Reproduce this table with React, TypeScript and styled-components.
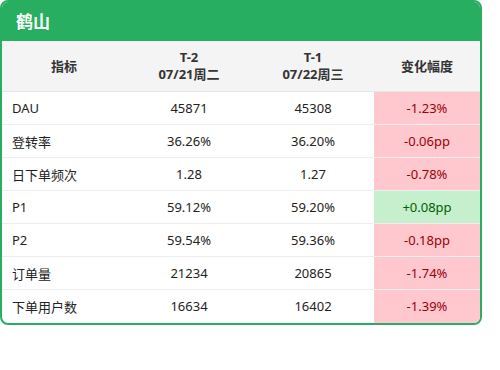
import React from "react";
import styled, { createGlobalStyle } from "styled-components";

const Global = createGlobalStyle`
  html, body { margin: 0; padding: 0; background: #ffffff; }
  body { font-family: "Noto Sans", "Noto Sans CJK SC", sans-serif; }
`;

const Card = styled.div`
  width: 482px;
  box-sizing: border-box;
  border: 2px solid #27ae60;
  border-radius: 8px;
  overflow: hidden;
  background: #ffffff;
`;

const Header = styled.div`
  height: 39px;
  background: #27ae60;
  color: #ffffff;
  display: flex;
  align-items: center;
  padding: 0 14px;
  font-family: "Noto Sans CJK SC", sans-serif;
  font-weight: 700;
  font-size: 17px;
  padding-bottom: 2px;
  box-sizing: border-box;
`;

const Table = styled.table`
  width: 100%;
  border-collapse: collapse;
  table-layout: fixed;
  font-size: 13px;
  color: #222;
`;

const Th = styled.th<{ $w: number }>`
  width: ${(p) => p.$w}px;
  height: 50px;
  padding: 0;
  background: #f4f4f4;
  color: #333;
  font-weight: 700;
  font-size: 13px;
  line-height: 17px;
  text-align: center;
  border-bottom: 1px solid #e8e8e8;
  font-family: "Noto Sans", "Noto Sans CJK SC", sans-serif;
`;

const Row = styled.tr`
  height: 33px;
  & > td { border-bottom: 1px solid #eeeeee; }
  &:last-child > td { border-bottom: none; }
`;

const Name = styled.td`
  padding: 0 0 0 10px;
  text-align: left;
  font-family: "Noto Sans", "Noto Sans CJK SC", sans-serif;
`;

const Num = styled.td`
  padding: 0;
  text-align: center;
`;

const Change = styled.td<{ $up: boolean }>`
  padding: 0;
  text-align: center;
  background: ${(p) => (p.$up ? "#c6efce" : "#ffc7ce")};
  color: ${(p) => (p.$up ? "#006100" : "#9c0006")};
`;

const rows = [
  { name: "DAU", t2: "45871", t1: "45308", ch: "-1.23%" },
  { name: "登转率", t2: "36.26%", t1: "36.20%", ch: "-0.06pp" },
  { name: "日下单频次", t2: "1.28", t1: "1.27", ch: "-0.78%" },
  { name: "P1", t2: "59.12%", t1: "59.20%", ch: "+0.08pp" },
  { name: "P2", t2: "59.54%", t1: "59.36%", ch: "-0.18pp" },
  { name: "订单量", t2: "21234", t1: "20865", ch: "-1.74%" },
  { name: "下单用户数", t2: "16634", t1: "16402", ch: "-1.39%" },
];

export default function App() {
  return (
    <>
      <Global />
      <Card>
        <Header>鹤山</Header>
        <Table>
          <thead>
            <tr>
              <Th $w={124}>指标</Th>
              <Th $w={126}>
                T-2
                <br />
                07/21周二
              </Th>
              <Th $w={122}>
                T-1
                <br />
                07/22周三
              </Th>
              <Th $w={106}>变化幅度</Th>
            </tr>
          </thead>
          <tbody>
            {rows.map((r) => (
              <Row key={r.name}>
                <Name>{r.name}</Name>
                <Num>{r.t2}</Num>
                <Num>{r.t1}</Num>
                <Change $up={r.ch.startsWith("+")}>{r.ch}</Change>
              </Row>
            ))}
          </tbody>
        </Table>
      </Card>
    </>
  );
}
